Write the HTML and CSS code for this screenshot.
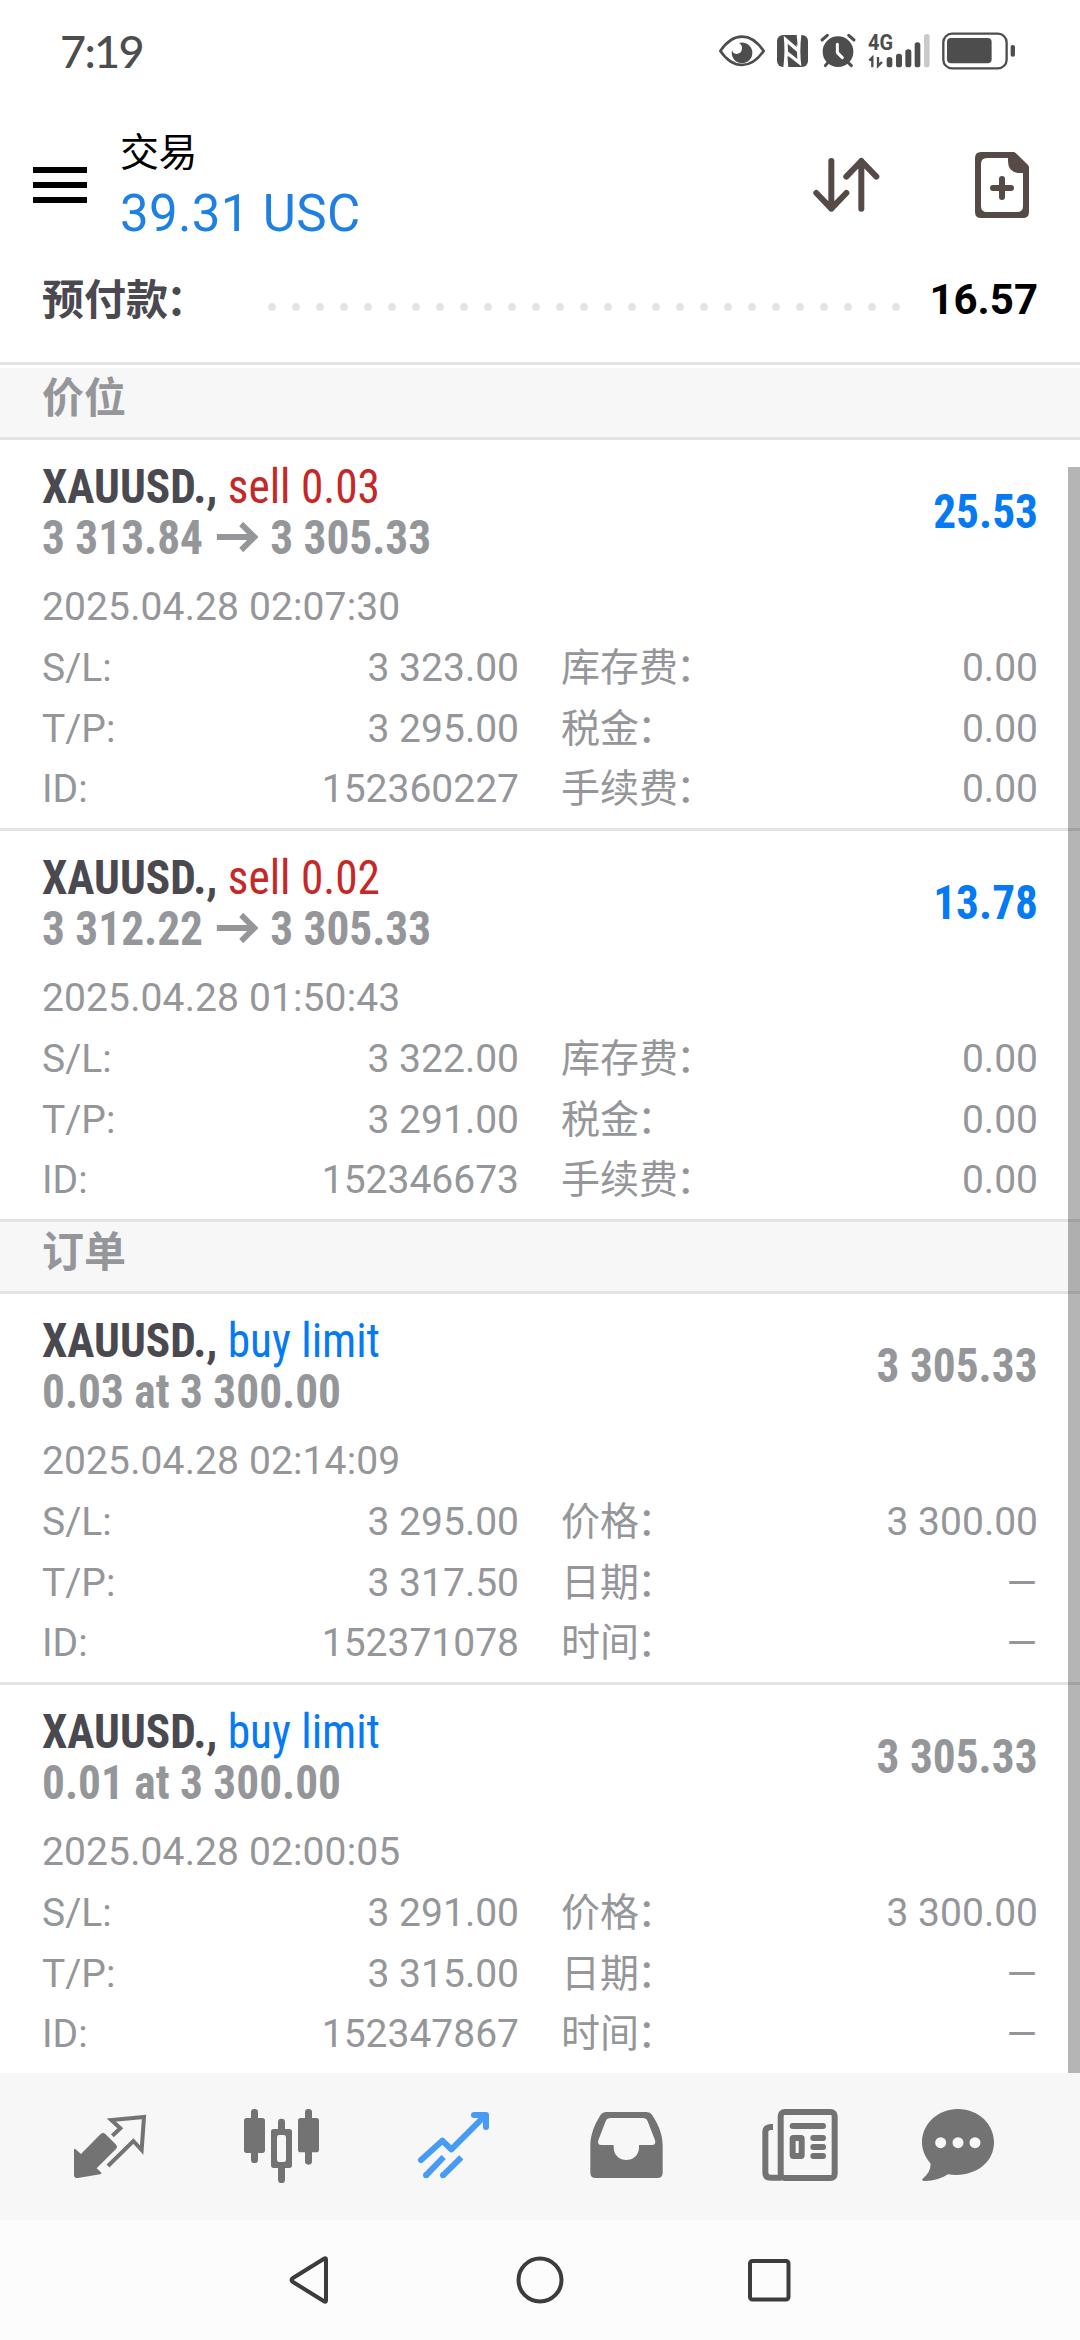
FILE: index.html
```html
<!DOCTYPE html>
<html lang="zh-CN">
<head>
<meta charset="utf-8">
<title>交易</title>
<link rel="stylesheet" href="styles.css">
</head>
<body>
<div class="screen">
  <div class="status">
    <span class="clock">7:19</span>
    <svg class="status-icons" viewBox="30 80 930 140">
      <g fill="none" stroke="#4d4d4d" stroke-width="8">
        <path d="M61 152Q90 109 126 109T191 152Q162 194 126 194T61 152Z" stroke-linejoin="round"/>
      </g>
      <path fill="#4d4d4d" d="M117 128a31 31 0 1 1-21 22q3 11 14 11q16-2 16-17q0-11-9-16Z"/>
      <rect x="231" y="104" width="93" height="96" rx="18" fill="#4d4d4d"/>
      <g fill="#fff">
        <path d="M251 106L294 144V157L263 130L266 200H250Q256 152 251 106Z"/>
        <path d="M304 198L261 164V151L292 176L288 104H304Q298 152 304 198Z"/>
      </g>
      <path fill="#4d4d4d" d="M264 104H290L293 136ZM291 200H265L262 168Z"/>
      <circle cx="414" cy="154" r="46" fill="#4d4d4d"/>
      <g stroke="#4d4d4d" stroke-width="9" stroke-linecap="round" fill="none">
        <path d="M366 119L382 105M462 119L446 105M376 196L386 184M454 196L442 184"/>
      </g>
      <path d="M412 132V157L427 172" stroke="#fff" stroke-width="9" stroke-linecap="round" stroke-linejoin="round" fill="none"/>
      <text class="net" x="504" y="150" textLength="75" lengthAdjust="spacingAndGlyphs">4G</text>
      <path d="M508 181L517 172V201M534 170V197L546 185" fill="none" stroke="#4d4d4d" stroke-width="7"/>
      <g fill="#4d4d4d">
        <rect x="560" y="170" width="17" height="31" rx="8"/>
        <rect x="588" y="160" width="18" height="41" rx="8"/>
        <rect x="616" y="147" width="18" height="54" rx="8"/>
        <rect x="644" y="126" width="17" height="75" rx="8"/>
        <rect x="672" y="101" width="17" height="100" rx="8" fill="#cacaca"/>
        <rect x="741" y="113" width="134" height="76" rx="12"/>
        <rect x="932" y="134" width="13" height="35" rx="6"/>
      </g>
      <rect x="730" y="100" width="190" height="104" rx="26" fill="none" stroke="#4d4d4d" stroke-width="7"/>
    </svg>
  </div>

  <header class="header">
    <div class="menu"><i></i><i></i><i></i></div>
    <div class="titles">
      <div class="title">交易</div>
      <div class="balance">39.31 USC</div>
    </div>
    <svg class="ic-sort" viewBox="338 456 200 200" fill="none" stroke="#554a46" stroke-width="18" stroke-linecap="round" stroke-linejoin="round">
      <path d="M393 483V626M348 579L393 626L438 579M483 626V483M438 530L483 483L528 530"/>
    </svg>
    <svg class="ic-new" viewBox="825 456 162 198" fill="#554a46">
      <path fill-rule="evenodd" d="M843 456H940Q944 456 947 459L984 495Q987 498 987 503V636Q987 654 969 654H843Q825 654 825 636V474Q825 456 843 456ZM861 474Q843 474 843 492V618Q843 636 861 636H951Q969 636 969 618V519H956Q924 517 924 484V474Z"/>
      <path d="M906 537V591M879 564H933" stroke="#554a46" stroke-width="18" stroke-linecap="round"/>
    </svg>
  </header>

  <div class="margin-row">
    <span class="margin-label">预付款<span class="colon">：</span></span>
    <span class="dots"></span>
    <b class="margin-value">16.57</b>
  </div>

  <main class="list">
    <h2 class="section first">价位</h2>

    <article class="card">
      <div class="head">
        <div class="deal">
          <div class="symbol"><b>XAUUSD.,</b> <span class="sell">sell 0.03</span></div>
          <div class="price">3 313.84 <svg class="arrow" viewBox="0 0 44 30"><path d="M0 15H40M26 2L40 15L26 28"/></svg> 3 305.33</div>
        </div>
        <div class="profit gain">25.53</div>
      </div>
      <div class="date">2025.04.28 02:07:30</div>
      <div class="grid">
        <div class="row"><span>S/L:</span><span>3 323.00</span></div><div class="row"><span>库存费<span class="colon">：</span></span><span>0.00</span></div>
        <div class="row"><span>T/P:</span><span>3 295.00</span></div><div class="row"><span>税金<span class="colon">：</span></span><span>0.00</span></div>
        <div class="row"><span>ID:</span><span>152360227</span></div><div class="row"><span>手续费<span class="colon">：</span></span><span>0.00</span></div>
      </div>
    </article>

    <article class="card">
      <div class="head">
        <div class="deal">
          <div class="symbol"><b>XAUUSD.,</b> <span class="sell">sell 0.02</span></div>
          <div class="price">3 312.22 <svg class="arrow" viewBox="0 0 44 30"><path d="M0 15H40M26 2L40 15L26 28"/></svg> 3 305.33</div>
        </div>
        <div class="profit gain">13.78</div>
      </div>
      <div class="date">2025.04.28 01:50:43</div>
      <div class="grid">
        <div class="row"><span>S/L:</span><span>3 322.00</span></div><div class="row"><span>库存费<span class="colon">：</span></span><span>0.00</span></div>
        <div class="row"><span>T/P:</span><span>3 291.00</span></div><div class="row"><span>税金<span class="colon">：</span></span><span>0.00</span></div>
        <div class="row"><span>ID:</span><span>152346673</span></div><div class="row"><span>手续费<span class="colon">：</span></span><span>0.00</span></div>
      </div>
    </article>

    <h2 class="section">订单</h2>

    <article class="card">
      <div class="head">
        <div class="deal">
          <div class="symbol"><b>XAUUSD.,</b> <span class="buy">buy limit</span></div>
          <div class="price">0.03 at 3 300.00</div>
        </div>
        <div class="profit">3 305.33</div>
      </div>
      <div class="date">2025.04.28 02:14:09</div>
      <div class="grid">
        <div class="row"><span>S/L:</span><span>3 295.00</span></div><div class="row"><span>价格<span class="colon">：</span></span><span>3 300.00</span></div>
        <div class="row"><span>T/P:</span><span>3 317.50</span></div><div class="row"><span>日期<span class="colon">：</span></span><span class="dash">—</span></div>
        <div class="row"><span>ID:</span><span>152371078</span></div><div class="row"><span>时间<span class="colon">：</span></span><span class="dash">—</span></div>
      </div>
    </article>

    <article class="card last">
      <div class="head">
        <div class="deal">
          <div class="symbol"><b>XAUUSD.,</b> <span class="buy">buy limit</span></div>
          <div class="price">0.01 at 3 300.00</div>
        </div>
        <div class="profit">3 305.33</div>
      </div>
      <div class="date">2025.04.28 02:00:05</div>
      <div class="grid">
        <div class="row"><span>S/L:</span><span>3 291.00</span></div><div class="row"><span>价格<span class="colon">：</span></span><span>3 300.00</span></div>
        <div class="row"><span>T/P:</span><span>3 315.00</span></div><div class="row"><span>日期<span class="colon">：</span></span><span class="dash">—</span></div>
        <div class="row"><span>ID:</span><span>152347867</span></div><div class="row"><span>时间<span class="colon">：</span></span><span class="dash">—</span></div>
      </div>
    </article>
    <div class="scrollbar"></div>
  </main>

  <nav class="tabs">
    <svg viewBox="-180 -81 540 441">
      <path fill="#737373" d="M42 148Q43 145 46 147L63 162L122 102Q129 96 136 102L167 133Q174 140 168 147L110 205L122 216Q127 222 120 223L54 234Q42 235 42 224Z"/>
      <path fill="none" stroke="#737373" stroke-width="12" d="M157 107L181 85L154 60L252 51L245 150L220 123L144 198" stroke-linejoin="miter"/>
    </svg>
    <svg viewBox="360 -81 540 441" fill="#737373">
      <rect x="552" y="54" width="63" height="105" rx="8"/><rect x="714" y="54" width="63" height="103" rx="8"/>
      <rect x="573" y="27" width="21" height="162" rx="10"/><rect x="735" y="27" width="21" height="167" rx="10"/>
      <rect x="654" y="56" width="21" height="50" rx="10"/><rect x="654" y="190" width="21" height="59" rx="10"/>
      <path fill="#f7f7f7" d="M645 96H684V195H645Z"/>
      <path fill-rule="evenodd" d="M641 87H688Q696 87 696 95V196Q696 204 688 204H641Q633 204 633 196V95Q633 87 641 87ZM658 105Q651 105 651 112V179Q651 186 658 186H671Q678 186 678 179V112Q678 105 671 105Z"/>
    </svg>
    <svg viewBox="-120 -81 540 441" fill="none" stroke="#469bf5" stroke-width="18">
      <path stroke-linejoin="round" stroke-linecap="round" d="M63 180L127 122L154 148L256 46M222 45H258V81"/>
      <path d="M131 171L78 226M184 172L129 226"/>
      <g fill="#469bf5" stroke="none"><circle cx="78" cy="226" r="9"/><circle cx="129" cy="226" r="9"/></g>
    </svg>
    <svg viewBox="420 -81 540 441" fill="#737373">
      <path fill-rule="evenodd" d="M620 36H738Q750 36 757 46C776 75 788 105 788 138V218Q788 234 772 234H587Q571 234 571 218V138C571 105 583 75 601 46Q608 36 620 36ZM632 54Q621 54 617 64L595 121Q591 135 604 135H641V142C641 193 717 193 717 142V135H756Q769 135 765 121L743 64Q739 54 728 54Z"/>
    </svg>
    <svg viewBox="-60 -81 540 441" fill="none" stroke="#737373" stroke-width="18">
      <rect x="122" y="36" width="162" height="198" rx="12"/>
      <path d="M99 81H92Q76 82 76 96V218Q76 233 92 233H124"/>
      <path stroke-linecap="round" d="M158 78H249M220 114H249M220 141H249M220 168H249"/>
      <rect x="158" y="114" width="27" height="54" rx="2"/>
    </svg>
    <svg viewBox="480 -81 540 441">
      <path fill="#737373" d="M654 27C715 27 762 72 762 127C762 190 703 234 624 223Q592 244 552 243Q544 242 548 236Q572 217 572 191C555 171 546 150 546 127C546 72 593 27 654 27Z"/>
      <g fill="#f7f7f7"><circle cx="602" cy="128" r="16.5"/><circle cx="654" cy="128" r="16.5"/><circle cx="705" cy="128" r="16.5"/></g>
    </svg>
  </nav>

  <div class="system">
    <svg viewBox="0 0 48 48"><path d="M40 3.5V44.5Q40 46.500 38 45.3L7 26Q4 24 7 22L38 2.700Q40 1.500 40 3.500Z"/></svg>
    <svg viewBox="0 0 48 48"><circle cx="24" cy="24" r="21.5"/></svg>
    <svg viewBox="0 0 48 48"><rect x="4" y="5" width="38.5" height="38.5" rx="2.5"/></svg>
  </div>
</div>
</body>
</html>
```
FILE: styles.css
```css
* { box-sizing: border-box; }
body {
  margin: 0;
  background: #fff;
  font-family: Roboto, "Noto Sans CJK SC", sans-serif;
  font-size: 39px;
  color: #95969a;
}
svg { display: block; flex: none; }
.screen {
  display: flex;
  flex-direction: column;
  width: 1080px;
  height: 2340px;
  overflow: hidden;
}
.status {
  display: flex;
  justify-content: space-between;
  height: 100px;
  padding: 0 60px 0 60px;
}
.clock {
  font-family: Lato, sans-serif;
  font-size: 45px;
  font-weight: 500;
  line-height: 102px;
  color: #4d4d4d;
  letter-spacing: -1.7px;
}
.status-icons { width: 310px; height: 46.67px; margin-top: 26.67px; }
.net { font: 700 65px Roboto, sans-serif; fill: #4d4d4d; }

.header {
  display: flex;
  height: 170px;
  padding: 28px 51px 0 33px;
}
.menu {
  display: flex;
  flex-direction: column;
  gap: 9px;
  width: 54px;
  margin: 39px 33px 0 0;
}
.menu i { height: 6px; background: #000; }
.titles { flex: 1; }
.title { line-height: 50px; color: #000; letter-spacing: -.5px; }
.balance { margin-top: 6px; font-size: 51px; line-height: 60px; color: #1e80e3; letter-spacing: .35px; }
.ic-sort { width: 66.67px; height: 66.67px; margin: 24px 95px 0 0; }
.ic-new { width: 54px; height: 66px; margin-top: 24px; }
.colon { margin-left: -2px; }

.margin-row {
  display: flex;
  justify-content: space-between;
  height: 92px;
  padding: 0 42px;
  font-size: 42px;
  line-height: 60px;
}
.margin-label { width: 218px; padding-top: 1px; color: #4a4950; font-weight: 700; white-space: nowrap; }
.dots {
  width: 648px;
  height: 8px;
  margin-top: 33px;
  background: radial-gradient(circle at center, #e4e4e4 3.6px, transparent 4.3px) 0 0 / 24px 8px;
}
.margin-value { flex: 1; text-align: right; color: #000; }

.list { position: relative; height: 1711px; }
.section {
  height: 72px;
  margin: 0;
  padding: 2px 0 0 42px;
  background: #f7f7f7;
  border-bottom: 3px solid #e4e4e4;
  font-size: 42px;
  line-height: 58px;
  font-weight: 700;
}
.section.first {
  height: 78px;
  border-top: 3px solid #e4e4e4;
  box-shadow: inset 0 3px #fff;
  line-height: 64px;
}
.card { height: 391px; padding: 22px 42px 0; border-bottom: 3px solid #e4e4e4; }
.card.last { height: 388px; border-bottom: 0; }
.head {
  display: flex;
  justify-content: space-between;
  height: 100px;
  font-family: "Roboto Condensed", Roboto, sans-serif;
  font-size: 48px;
}
/* Tighter than the stock condensed width */
.deal { transform: scaleX(.944); transform-origin: left; }
.symbol { height: 51px; line-height: 50px; white-space: nowrap; }
.symbol b { color: #4a4950; }
.sell { color: #c62828; }
.buy { color: #067af2; }
.price { height: 49px; line-height: 50px; font-weight: 700; white-space: nowrap; }
.arrow {
  display: inline-block;
  width: 44px;
  height: 30px;
  margin: 0 2px 0 3px;
  vertical-align: 2px;
  fill: none;
  stroke: #95969a;
  stroke-width: 6;
}
.profit { line-height: 100px; font-weight: 700; transform: scaleX(.944); transform-origin: right; }
.gain { color: #067af2; }
.date { margin-top: 15px; line-height: 61px; letter-spacing: .12px; }
.grid { display: grid; grid-template-columns: 1fr 1fr; column-gap: 42px; grid-template-rows: 61px 60px 60px; }
.row { display: flex; justify-content: space-between; line-height: 61px; }
.dash { line-height: 60px; margin-right: 1px; }
.scrollbar {
  position: absolute;
  right: 0;
  top: 105px;
  bottom: 0;
  width: 12px;
  background: rgba(0, 0, 0, .29);
}

.tabs {
  display: grid;
  grid-template-columns: repeat(6, 1fr);
  height: 147px;
  background: #f7f7f7;
}
.tabs svg { width: 180px; height: 147px; }
.system {
  display: flex;
  justify-content: center;
  align-items: center;
  gap: 182px;
  height: 120px;
  background: #fcfcfc;
}
.system svg { width: 48px; height: 48px; fill: none; stroke: #3c3c3c; stroke-width: 4; }
```
